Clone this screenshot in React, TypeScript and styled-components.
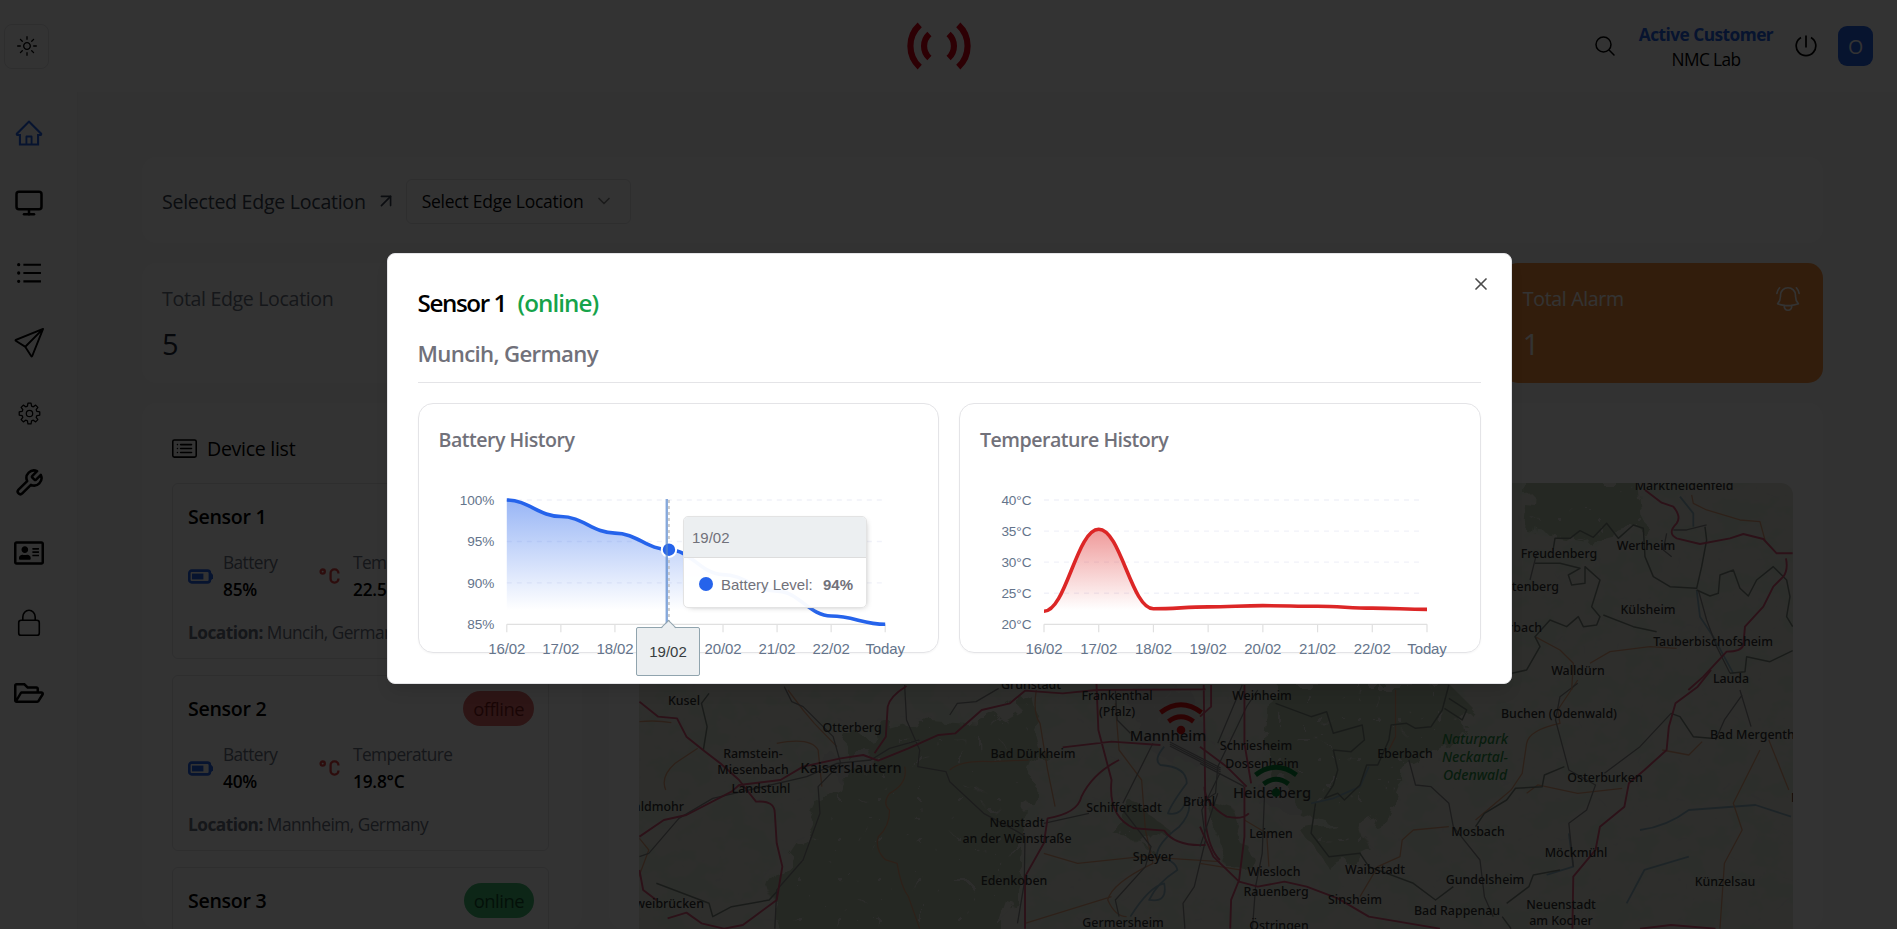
import React from "react";
import styled, { createGlobalStyle } from "styled-components";
import { LuMonitor, LuWrench, LuX, LuChevronDown, LuArrowUpRight } from "react-icons/lu";
import { AiOutlineHome, AiOutlineUnorderedList } from "react-icons/ai";
import { BsSend, BsCardList } from "react-icons/bs";
import { FaRegAddressCard, FaRegFolderOpen } from "react-icons/fa";
import { RxSun } from "react-icons/rx";
import { HiOutlineMagnifyingGlass, HiOutlineBellAlert } from "react-icons/hi2";

const GlobalStyle = createGlobalStyle`
  * { box-sizing: border-box; }
  body {
    margin: 0;
    overflow: hidden;
    background: #fff;
    color: #000;
    font-family: "Open Sans", "Noto Sans", sans-serif;
  }
  svg { display: block; flex: none; }
`;

/* ---------- page shell ---------- */

const Page = styled.div`
  position: relative;
  width: 1897px;
  height: 929px;
  overflow: hidden;
  background: #fff;
`;

const Header = styled.header`
  height: 92px;
  display: grid;
  grid-template-columns: 1fr auto 1fr;
  align-items: center;
  padding: 0 24px 0 4px;
`;

const ThemeButton = styled.button`
  width: 45px;
  height: 45px;
  padding: 0;
  display: flex;
  align-items: center;
  justify-content: center;
  border: 1px solid #e4e4e7;
  border-radius: 8px;
  background: #fff;
  color: #000;
`;

const HeaderRight = styled.div`
  display: flex;
  align-items: center;
  justify-content: flex-end;
  gap: 21px;
`;

const Customer = styled.div`
  width: 136px;
  padding-top: 2px;
  text-align: center;
  white-space: nowrap;
  font-size: 17.3px;
  line-height: 25px;
`;

const CustomerTitle = styled.div`
  font-weight: 700;
  color: #2563eb;
  letter-spacing: -0.53px;
`;

const CustomerName = styled.div`
  letter-spacing: -0.6px;
`;

const Avatar = styled.div`
  width: 35px;
  height: 40px;
  border-radius: 9px;
  background: #2563eb;
  color: #fff;
  display: flex;
  align-items: center;
  justify-content: center;
  font-size: 19.6px;
`;

const Body = styled.div`
  display: flex;
  height: 837px;
`;

const Sidebar = styled.nav`
  width: 78px;
  flex: none;
  border-right: 1px solid #f4f4f5;
  padding: 26px 0 0 14px;
  display: flex;
  flex-direction: column;
  gap: 40px;
`;

const NavItem = styled.a<{ $active?: boolean }>`
  width: 30px;
  height: 30px;
  display: flex;
  align-items: center;
  justify-content: center;
  color: ${(p) => (p.$active ? "#2563eb" : "#000")};
`;

const Main = styled.main`
  flex: 1;
  padding: 65px 74px 0 64px;
  background: #fafafa;
  display: flex;
  flex-direction: column;
  gap: 20px;
`;

const Card = styled.section`
  background: #fff;
  border-radius: 15px;
`;

/* ---------- location picker and totals ---------- */

const PickerCard = styled(Card)`
  height: 86px;
  padding: 2px 20px 0;
  display: flex;
  align-items: center;
  font-size: 19.6px;
  letter-spacing: -0.28px;
  color: #374151;

  > svg { margin-left: 9px; }
`;

const Select = styled.div`
  margin-left: 9px;
  width: 225px;
  height: 45px;
  padding: 0 16px 0 15px;
  border: 1px solid #e4e4e7;
  border-radius: 6px;
  display: flex;
  align-items: center;
  justify-content: space-between;
  color: #09090b;
  font-size: 17.5px;
  letter-spacing: -0.25px;

  svg { opacity: 0.5; }
`;

const Stats = styled.div`
  display: grid;
  grid-template-columns: repeat(5, 1fr);
  gap: 20px;
`;

const StatCard = styled(Card)<{ $alarm?: boolean }>`
  height: 120px;
  padding: 21px 20px 0;
  background: ${(p) => (p.$alarm ? "#fb923c" : "#fff")};
  color: ${(p) => (p.$alarm ? "#fff" : "#1f2937")};
`;

const StatLabel = styled.div<{ $alarm?: boolean }>`
  display: flex;
  justify-content: space-between;
  font-size: 19.6px;
  line-height: 30px;
  letter-spacing: -0.35px;
  color: ${(p) => (p.$alarm ? "#fff" : "#6b7280")};
`;

const StatValue = styled.div`
  margin-top: 9px;
  font-size: 29px;
  line-height: 41px;
`;

/* ---------- device list ---------- */

const Panels = styled.div`
  flex: 1;
  min-height: 0;
  display: flex;
  gap: 27px;
`;

const DevicePanel = styled(Card)`
  width: 440px;
  padding: 20px 33px 0 30px;
`;

const PanelTitle = styled.h2`
  margin: 0 0 10px;
  height: 50px;
  display: flex;
  align-items: center;
  gap: 10px;
  font-size: 19.6px;
  font-weight: 400;
  letter-spacing: -0.3px;
`;

const DeviceCard = styled.article`
  height: 176px;
  margin-bottom: 16px;
  padding: 15px 14px 15px 15px;
  border: 1px solid #e4e4e7;
  border-radius: 6px;
`;

const DeviceHead = styled.div`
  height: 35px;
  display: flex;
  align-items: center;
  justify-content: space-between;
`;

const DeviceName = styled.h3`
  margin: 0;
  font-size: 19.6px;
  font-weight: 600;
  letter-spacing: -0.3px;
`;

const Badge = styled.span<{ $online?: boolean }>`
  height: 35px;
  padding: 0 10px;
  border-radius: 18px;
  display: flex;
  align-items: center;
  font-size: 18.4px;
  letter-spacing: -0.5px;
  background: ${(p) => (p.$online ? "#43bd74" : "#e06c6c")};
  color: ${(p) => (p.$online ? "#14532d" : "#7f1d1d")};
`;

const Metrics = styled.div`
  margin-top: 15px;
  display: grid;
  grid-template-columns: 130px 1fr;
`;

const Metric = styled.div`
  display: flex;
  align-items: center;
  gap: 10px;
  font-size: 17.3px;
  line-height: 27px;
`;

const MetricLabel = styled.div`
  letter-spacing: -0.58px;
  color: #6b7280;
`;

const MetricValue = styled.div`
  font-weight: 600;
  letter-spacing: -0.2px;
`;

const Location = styled.div`
  margin-top: 17px;
  font-size: 17.3px;
  line-height: 26px;
  letter-spacing: -0.52px;
  white-space: nowrap;
  color: #6b7280;

  b { font-weight: 700; }
`;

const MapPanel = styled(Card)`
  flex: 1;
  padding: 80px 30px 0;
`;

const MapFrame = styled.div`
  height: 446px;
  border-radius: 12px 12px 0 0;
  overflow: hidden;
`;

/* ---------- dialog ---------- */

const Overlay = styled.div`
  position: absolute;
  inset: 0;
  background: rgba(0, 0, 0, 0.8);
`;

const Dialog = styled.div`
  position: absolute;
  left: 386.5px;
  top: 253px;
  width: 1125px;
  height: 431px;
  padding: 30px;
  border: 1px solid #e4e4e7;
  border-radius: 8px;
  background: #fff;
  box-shadow: 0 10px 15px -3px rgba(0, 0, 0, 0.1);
`;

const CloseButton = styled.button`
  position: absolute;
  top: 20px;
  right: 20px;
  padding: 0;
  border: 0;
  background: none;
  color: #000;
  opacity: 0.7;
`;

const DialogTitle = styled.h2`
  margin: 0;
  display: flex;
  gap: 11.5px;
  font-size: 24.2px;
  line-height: 38px;
  font-weight: 600;
  letter-spacing: -1.4px;
`;

const Online = styled.span`
  color: #16a34a;
  letter-spacing: -0.95px;
`;

const DialogSubtitle = styled.div`
  margin-top: 13px;
  height: 48px;
  border-bottom: 1px solid #e4e4e7;
  font-size: 22.2px;
  line-height: 38px;
  font-weight: 600;
  letter-spacing: -0.65px;
  color: #71717a;
`;

const Charts = styled.div`
  margin-top: 20px;
  display: grid;
  grid-template-columns: 1fr 1fr;
  gap: 20px;
`;

const ChartCard = styled.section`
  position: relative;
  height: 250px;
  border: 1px solid #e4e4e7;
  border-radius: 15px;
  box-shadow: 0 1px 2px rgba(0, 0, 0, 0.04);

  > svg { overflow: visible; }
`;

const ChartTitle = styled.h3`
  margin: 0;
  height: 60px;
  padding: 20px 20px 0;
  font-size: 19.6px;
  line-height: 31px;
  font-weight: 600;
  letter-spacing: -0.5px;
  color: #71717a;
`;

const Tooltip = styled.div`
  position: absolute;
  left: 264.5px;
  top: 112px;
  width: 184px;
  height: 92px;
  border: 1px solid #e3e3e3;
  border-radius: 5px;
  overflow: hidden;
  background: rgba(255, 255, 255, 0.96);
  box-shadow: 2px 2px 6px -4px #999;
  font-family: "Liberation Sans", Arial, sans-serif;
  font-size: 15px;
  color: #71717a;
`;

const TooltipHead = styled.div`
  height: 41px;
  padding: 3px 0 0 8px;
  line-height: 35px;
  border-bottom: 1px solid #ddd;
  background: #eceff1;
`;

const TooltipRow = styled.div`
  height: 50px;
  padding: 2px 13px 0 15px;
  display: flex;
  align-items: center;

  b { margin-left: auto; }
`;

const Dot = styled.span`
  width: 14px;
  height: 14px;
  margin-right: 8px;
  border-radius: 50%;
  background: #2563eb;
`;

const AxisTip = styled.div`
  position: absolute;
  left: 217.5px;
  top: 223px;
  width: 64px;
  height: 49px;
  border: 1px solid #90a4ae;
  border-radius: 2px;
  background: #eceff1;
  color: #373d3f;
  font-family: "Liberation Sans", Arial, sans-serif;
  font-size: 15px;
  line-height: 48px;
  text-align: center;

  &::before {
    content: "";
    position: absolute;
    left: 26px;
    top: -6px;
    width: 10px;
    height: 10px;
    transform: rotate(45deg);
    border: 1px solid #90a4ae;
    border-right: 0;
    border-bottom: 0;
    background: linear-gradient(135deg, #eceff1 50%, transparent 50%);
  }
`;

/* ---------- icons without a package equivalent ---------- */

const Logo = () => (
  <svg width="66" height="50" viewBox="0 0 64 48" fill="none" stroke="#e00018" strokeWidth="6">
    <path d="M13.3 3.5A27.8 27.8 0 0 0 13.3 44.5M22.7 12.3A15.8 15.8 0 0 0 22.7 35.7" />
    <path d="M50.7 3.5A27.8 27.8 0 0 1 50.7 44.5M41.3 12.3A15.8 15.8 0 0 1 41.3 35.7" />
  </svg>
);

const PowerIcon = () => (
  <svg width="22" height="22" viewBox="0 0 22 22" fill="none" stroke="#000" strokeWidth="1.7">
    <path d="M6 2.4A9.8 9.8 0 1 0 16 2.4M11 .5v12" />
  </svg>
);

const gearPath = (() => {
  const pts: string[] = [];
  for (let i = 0; i < 8; i++) {
    const a = (i * Math.PI) / 4;
    [[-0.27, 7.7], [-0.15, 10.4], [0.15, 10.4], [0.27, 7.7]].forEach(([o, r]) => {
      pts.push(`${(11.5 + r * Math.sin(a + o)).toFixed(2)} ${(11.5 - r * Math.cos(a + o)).toFixed(2)}`);
    });
  }
  return `M${pts.join("L")}Z`;
})();

const GearIcon = () => (
  <svg width="23" height="23" viewBox="0 0 23 23" fill="none" stroke="#000" strokeWidth="1.25" strokeLinejoin="round">
    <path d={gearPath} />
    <circle cx="11.5" cy="11.5" r="3.2" />
  </svg>
);

const LockIcon = () => (
  <svg width="24" height="28" viewBox="0 0 24 28" fill="none" stroke="#000" strokeWidth="1.6">
    <rect x="1.7" y="11.3" width="20.6" height="15" rx="2.4" />
    <path d="M5.8 11.3V8a6.2 6.8 0 0 1 12.4 0v3.3" />
  </svg>
);

const BatteryIcon = () => (
  <svg width="25" height="15" viewBox="0 0 25 15">
    <rect x="1.3" y="1.6" width="20.6" height="11.8" rx="2.4" fill="none" stroke="#2563eb" strokeWidth="2.6" />
    <path d="M22 2.8l3 3v3.4l-3 3z" fill="#2563eb" />
    <rect x="4" y="4.6" width="11.4" height="5.8" fill="#2563eb" />
  </svg>
);

const CelsiusIcon = () => (
  <svg width="25" height="16" viewBox="0 0 25 16" fill="none" stroke="#e04444" strokeWidth="2.3">
    <circle cx="4.7" cy="3.6" r="2.1" />
    <path d="M20.4 5.6V5a3.6 3.6 0 0 0-3.6-3.6h-.6A3.6 3.6 0 0 0 12.6 5v6a3.6 3.6 0 0 0 3.6 3.6h.6a3.6 3.6 0 0 0 3.6-3.6v-.6" />
  </svg>
);

/* ---------- charts ---------- */

type ChartProps = {
  id: string;
  color: string;
  values: number[];
  min: number;
  max: number;
  step: number;
  unit: string;
  left: number;
  right: number;
  fillTop: number;
  cursor?: number;
};

const DAYS = ["16/02", "17/02", "18/02", "19/02", "20/02", "21/02", "22/02", "Today"];
const TOP = 36;
const BOTTOM = 160.3;

function AreaChart({ id, color, values, min, max, step, unit, left, right, fillTop, cursor }: ChartProps) {
  const dx = (right - left) / (values.length - 1);
  const x = (i: number) => left + i * dx;
  const y = (v: number) => BOTTOM - ((v - min) / (max - min)) * (BOTTOM - TOP);
  let line = `M${x(0)} ${y(values[0])}`;
  for (let i = 1; i < values.length; i++) {
    line += `C${x(i - 1) + dx * 0.4} ${y(values[i - 1])} ${x(i) - dx * 0.4} ${y(values[i])} ${x(i)} ${y(values[i])}`;
  }
  const ticks: number[] = [];
  for (let v = min; v <= max; v += step) ticks.push(v);

  return (
    <svg width="519" height="188" fontFamily='"Liberation Sans", Arial, sans-serif' fill="#64748b">
      <defs>
        <linearGradient id={id} gradientUnits="userSpaceOnUse" x1="0" x2="0" y1={fillTop} y2="146">
          <stop offset="0" stopColor={color} stopOpacity="0.47" />
          <stop offset="1" stopColor={color} stopOpacity="0" />
        </linearGradient>
      </defs>
      {ticks.map((v) => (
        <g key={v}>
          {v > min && <path d={`M${left} ${y(v)}H${right - 3}`} stroke="#f1f2f9" strokeWidth="1.4" strokeDasharray="5 5" />}
          <text x={left - 12.6} y={y(v) + 4.8} textAnchor="end" fontSize="13.6" letterSpacing="-0.1">{v}{unit}</text>
        </g>
      ))}
      <path d={`M${left} ${BOTTOM}H${right}`} stroke="#e0e0e0" strokeWidth="1.2" />
      {DAYS.map((d, i) => (
        <g key={d}>
          <path d={`M${x(i)} ${BOTTOM}v8`} stroke="#e0e0e0" strokeWidth="1.2" />
          <text x={x(i)} y="190.3" textAnchor="middle" fontSize="15" letterSpacing="-0.1">{d}</text>
        </g>
      ))}
      <path d={`${line}V${BOTTOM}H${left}Z`} fill={`url(#${id})`} />
      <path d={line} fill="none" stroke={color} strokeWidth="3.6" />
      {cursor !== undefined && (
        <g>
          <path d={`M${x(cursor)} ${TOP}V${BOTTOM}`} stroke="#b6b6b6" strokeWidth="1.3" strokeDasharray="3 3" />
          <circle cx={x(cursor)} cy={y(values[cursor])} r="7.2" fill={color} stroke="#fff" strokeWidth="2" />
          <path d={`M${x(cursor) - 2.2} ${TOP - 1}V${BOTTOM}`} stroke="rgba(84,132,204,0.7)" strokeWidth="2.4" />
        </g>
      )}
    </svg>
  );
}

/* ---------- map ---------- */

type Place = [string, number, number, number?, ("start" | "end")?];

const PLACES: Place[] = [
  ["Kusel", 684, 701], ["Otterberg", 852, 728], ["Ramstein-", 753, 754], ["Miesenbach", 753, 770],
  ["Landstuhl", 761, 789], ["Kaiserslautern", 851, 768, 14.7], ["Waldmohr", 684, 807, 12.4, "end"],
  ["Neustadt", 1017, 823], ["an der Weinstraße", 1017, 839], ["Bad Dürkheim", 1033, 754],
  ["Frankenthal", 1117, 696], ["(Pfalz)", 1117, 712], ["Mannheim", 1168, 736, 14.8], ["Schifferstadt", 1124, 808],
  ["Brühl", 1199, 802], ["Speyer", 1153, 857], ["Edenkoben", 1014, 881], ["Germersheim", 1123, 923],
  ["Zweibrücken", 704, 904, 12.4, "end"], ["Grünstadt", 1031, 685], ["Weinheim", 1262, 696],
  ["Schriesheim", 1256, 746], ["Dossenheim", 1262, 764], ["Heidelberg", 1272, 793, 14.8], ["Leimen", 1271, 834],
  ["Wiesloch", 1274, 872], ["Rauenberg", 1276, 892], ["Östringen", 1279, 926], ["Eberbach", 1405, 754],
  ["Mosbach", 1478, 832], ["Waibstadt", 1375, 870], ["Gundelsheim", 1485, 880], ["Sinsheim", 1355, 900],
  ["Bad Rappenau", 1457, 911], ["Neuenstadt", 1561, 905], ["am Kocher", 1561, 921], ["Möckmühl", 1576, 853],
  ["Künzelsau", 1725, 882], ["Osterburken", 1605, 778], ["Buchen (Odenwald)", 1559, 714], ["Lauda", 1731, 679],
  ["Bad Mergentheim", 1710, 735, 12.4, "start"], ["Walldürn", 1578, 671], ["Marktheidenfeld", 1684, 486],
  ["Wertheim", 1646, 546], ["Freudenberg", 1559, 554], ["Miltenberg", 1559, 587, 12.4, "end"],
  ["Külsheim", 1648, 610], ["Amorbach", 1542, 628, 12.4, "end"], ["Tauberbischofsheim", 1713, 642],
  ["Niederstetten", 1791, 798, 12.4, "start"],
];

const WEST = "translate(630 670) scale(0.3762 0.3333)";
const EAST = "translate(1200 670) scale(0.4444 0.3333)";
const NORTH = "translate(1500 460) scale(0.3333)";

const Road = styled.path<{ $kind: "motorway" | "primary" | "rail" | "river" | "border" }>`
  fill: none;
  stroke-linejoin: round;
  vector-effect: non-scaling-stroke;
  stroke: ${(p) =>
    ({ motorway: "#d95577", primary: "#dfa27c", rail: "#8b8b8c", river: "#93b4c2", border: "#7d887f" })[p.$kind]};
  stroke-width: ${(p) => ({ motorway: 1.9, primary: 1.3, rail: 1.3, river: 1.8, border: 1.5 })[p.$kind]}px;
`;

const Signal = ({ x, y, color }: { x: number; y: number; color: string }) => (
  <g transform={`translate(${x} ${y})`} fill="none" stroke={color} strokeWidth="4.8">
    <path d="M-20.5 -17.5Q0 -33 20.5 -17.5M-12.5 -8.5Q0 -18 12.5 -8.5" />
    <circle r="4.3" fill={color} stroke="none" />
  </g>
);

const MapView = () => (
  <svg width="1154" height="446" viewBox="639 483 1154 446" fontFamily='"Noto Sans", sans-serif'>
    <defs>
      <filter id="woods" x="0" y="0" width="100%" height="100%">
        <feTurbulence type="fractalNoise" baseFrequency="0.032 0.04" numOctaves="4" seed="7" />
        <feColorMatrix values="0 0 0 0 0.72  0 0 0 0 0.80  0 0 0 0 0.67  8 0 0 0 -3.8" />
      </filter>
      <filter id="rough" x="-5%" y="-5%" width="110%" height="110%">
        <feTurbulence type="fractalNoise" baseFrequency="0.04" numOctaves="3" seed="3" />
        <feDisplacementMap in="SourceGraphic" scale="34" />
      </filter>
      <filter id="lanes" x="0" y="0" width="100%" height="100%">
        <feTurbulence type="turbulence" baseFrequency="0.025" numOctaves="2" seed="11" />
        <feColorMatrix values="0 0 0 0 0.74  0 0 0 0 0.73  0 0 0 0 0.70  -30 0 0 0 1.1" />
      </filter>
    </defs>
    <rect x="639" y="483" width="1154" height="446" fill="#e6e5dc" />
    <rect x="639" y="483" width="1154" height="446" filter="url(#woods)" />
    <g fill="#b9c9ae" filter="url(#rough)">
      <path d="M850 740l70-20 60 5 50-30 15 60-20 50-5 70-30 90-190 10-30-90 40-60z" />
      <path d="M1275 680l170 0 30 30-30 40-40 20-20 50-30 10-60-20-30-40z" />
      <path d="M1530 475l110 0 5 50-60 15-60-10zM1300 830l60-10 10 30-40 20z" />
      <path d="M1205 800l30 10 20 60-30-5zM1110 830l20-30 40 30-20 20z" />
    </g>
    <g fill="#dcdad8" filter="url(#rough)">
      <path d="M1130 690l60 0 20 50-30 30-45-30zM1255 780l35 0 5 30-30 0zM825 755l50 0 5 15-50 4z" />
    </g>
    <rect x="639" y="483" width="1154" height="446" filter="url(#lanes)" />
    <g transform={WEST}>
      <Road $kind="river" d="M1420 230Q1390 270 1410 285Q1480 290 1480 340Q1440 400 1430 430Q1470 440 1480 380Q1500 420 1460 470Q1400 520 1400 560Q1450 570 1455 600Q1400 640 1380 690Q1430 700 1420 640Q1380 650 1330 740" />
      <Road $kind="primary" d="M25 155Q70 150 110 158M95 360Q80 320 120 280L180 235M390 220Q480 200 500 240L510 350M420 60L460 120L490 160L550 230M730 290Q740 340 690 370Q670 400 690 420Q690 470 660 500Q650 540 680 570L710 580Q720 650 740 680L770 776M850 300Q880 270 960 275L1060 270M1080 60Q1070 130 1090 160L1110 300L1130 410M1290 100L1300 240L1360 330L1370 480L1390 580Q1280 640 1270 690Q1290 740 1320 740M1100 550L1190 580L1360 560L1568 575M1050 760L1280 680M25 505L50 540L20 630" />
      <Road $kind="rail" d="M25 560L50 550L130 445L220 385L470 320L550 280L640 270L690 235L770 210M730 45L735 150L770 240L765 290L840 305L850 335L940 430L1030 485L1050 500L1048 640L1030 760M1100 460L1220 430M1310 400L1390 220M1310 420L1385 530L1370 590L1290 690L1300 740M850 135L870 100L920 95L980 55M1290 60L1295 150L1330 190M1568 310L1520 420L1530 510L1500 650L1470 700L1475 776M410 50L430 95L460 110L540 200L560 280L500 350L505 430L460 570L390 660L385 776" />
      <Road $kind="border" d="M210 70L190 100L205 170L195 240M390 665L370 690L270 710L220 740L210 700L70 640" />
      <Road $kind="motorway" d="M25 95L75 140L125 145L150 200L200 245L240 280L290 330L300 345L335 395Q385 390 385 430L390 520L405 590L390 690L330 740L300 765L250 776L190 760L150 728L100 745M25 500L90 450L150 435L270 365L290 345L400 330L460 290L560 265L620 255L660 272L740 235L820 195L865 190L935 120L1010 100L1050 62L1150 70L1240 60L1530 58M735 48Q690 80 685 110L680 200L650 250M1240 42L1245 180L1280 330Q1270 440 1340 475L1420 482Q1450 530 1530 525M1050 776L1050 620L1100 520L1110 445Q1190 430 1200 380Q1230 310 1300 270M1150 232L1280 215L1410 225M1525 45L1530 460Q1540 540 1568 570M25 600L35 660L70 690" />
      <Road $kind="rail" d="M1435 222L1570 300M1435 228L1570 306M1435 216L1570 294" />
    </g>
    <g transform={EAST}>
      <Road $kind="river" d="M990 480Q1050 470 1100 420L1250 405L1330 440M1100 560L1000 600L960 700M830 490L840 590L780 615M250 400L300 385L360 350L380 290" />
      <Road $kind="primary" d="M850 30L805 120L810 160Q740 180 735 220L725 310L700 360L620 450M440 60L440 200L425 240M560 470L480 480L455 510L450 560L400 590L360 680M1040 240L1100 255L1130 215M1280 210L1325 360M1260 240L1200 400L1220 480L1180 580L1170 776M735 370L760 345L850 370L950 355M100 450L150 490L155 590M0 580L90 600" />
      <Road $kind="rail" d="M130 60L105 110L40 290L35 370L0 400M145 380L140 550L125 650L118 776M0 530L40 370M95 45L40 220M850 40L810 80L800 150L830 300L890 345L870 420L830 460L840 590M1220 75L1180 150L1160 210M1215 60L1240 170M910 310L990 230L1060 130M0 280L100 350M470 270L485 345L520 350L560 400L570 470L630 570L640 680L660 740" />
      <Road $kind="border" d="M170 100L250 140L285 125L300 190L365 165L370 210L340 245L300 240L310 300L300 345L280 385L310 370L325 390L360 345L375 285L400 285L425 210L430 165L465 160L485 175L520 170L545 120L560 45M560 85L600 120L590 150L550 115M820 290L775 315L770 350L710 355L690 390L640 430L620 470M260 400L250 490L290 560L360 550L380 590L480 640L530 690L570 650M690 700L740 650L750 615L810 600M1060 130L1080 140L1110 200L1150 205M680 740L700 776" />
      <Road $kind="motorway" d="M1150 0L1120 50L1070 100L1055 170L1050 240L1000 300L965 340L955 410L900 470L890 540L840 620L838 776M25 45L25 110L0 140M100 45L100 220L115 340M100 350L100 500L88 630L70 690L68 776M10 350Q10 400 60 440Q95 450 110 430M0 470L30 560L88 635L130 650L190 635L240 650L310 685L380 740L540 776M990 776L1060 765L1160 776M0 230L60 290L105 350" />
    </g>
    <g transform={NORTH}>
      <Road $kind="river" d="M540 110L580 160L580 200M590 390L600 470L640 530L700 640" />
      <Road $kind="primary" d="M575 105L580 130L620 150L720 180L780 185L795 240M105 530L180 570L220 610L215 690M270 610L330 575L450 560L530 565" />
      <Road $kind="rail" d="M110 280L90 360M595 390L620 480L650 560L690 640M520 210L560 210L620 195M500 220L490 270L515 290" />
      <Road $kind="border" d="M160 265L165 235L210 235L240 212L280 232L320 190L355 235L400 195L430 205L435 290L460 350L510 380L590 385L605 320L620 240L615 200M590 390L630 408L655 400L660 345L700 330L720 385L745 408L770 360L820 320L860 360L870 410L860 470L878 500M105 310L180 310L240 325L205 345L215 375L255 370L255 320L300 360L275 440L300 470L290 495L250 500L235 470L200 500L150 480L105 530L120 560L80 630L36 640M310 465L400 500L470 515M690 640L735 635L740 590L810 605L878 572" />
      <Road $kind="motorway" d="M435 90L485 128L520 140Q545 170 530 190Q500 220 530 235L600 252L690 235L730 222L790 237L830 280L878 280M858 295Q865 330 850 350L820 380L790 440L735 500L730 555Q725 575 680 575L610 650L565 690" />
    </g>
    <g fill="#333" textAnchor="middle" fontWeight="500">
      {PLACES.map(([name, x, y, size = 12.4, anchor = "middle"]) => (
        <text key={name} x={x} y={y + size * 0.36} fontSize={size} textAnchor={anchor}>{name}</text>
      ))}
    </g>
    <g fill="#2c8f46" fontSize="14" fontStyle="italic" fontWeight="500" textAnchor="middle">
      <text x="1475" y="744">Naturpark</text>
      <text x="1475" y="762">Neckartal-</text>
      <text x="1475" y="780">Odenwald</text>
    </g>
    <Signal x={1181} y={730} color="#e01212" />
    <Signal x={1276} y={792.5} color="#07893a" />
  </svg>
);

/* ---------- app ---------- */

const DEVICES = [
  { name: "Sensor 1", online: true, battery: "85%", temp: "22.5°C", place: "Muncih, Germany" },
  { name: "Sensor 2", online: false, battery: "40%", temp: "19.8°C", place: "Mannheim, Germany" },
  { name: "Sensor 3", online: true, battery: "75%", temp: "21.0°C", place: "Heidelberg, Germany" },
];

export default function App() {
  return (
    <Page>
      <GlobalStyle />
      <Header>
        <ThemeButton><RxSun size={20} /></ThemeButton>
        <Logo />
        <HeaderRight>
          <HiOutlineMagnifyingGlass size={24} />
          <Customer>
            <CustomerTitle>Active Customer</CustomerTitle>
            <CustomerName>NMC Lab</CustomerName>
          </Customer>
          <PowerIcon />
          <Avatar>O</Avatar>
        </HeaderRight>
      </Header>
      <Body>
        <Sidebar>
          <NavItem $active><AiOutlineHome size={30} /></NavItem>
          <NavItem><LuMonitor size={30} /></NavItem>
          <NavItem><AiOutlineUnorderedList size={30} /></NavItem>
          <NavItem><BsSend size={30} /></NavItem>
          <NavItem><GearIcon /></NavItem>
          <NavItem><LuWrench size={30} /></NavItem>
          <NavItem><FaRegAddressCard size={30} /></NavItem>
          <NavItem><LockIcon /></NavItem>
          <NavItem><FaRegFolderOpen size={30} /></NavItem>
        </Sidebar>
        <Main>
          <PickerCard>
            Selected Edge Location
            <LuArrowUpRight size={22} strokeWidth={1.8} />
            <Select>
              Select Edge Location
              <LuChevronDown size={20} />
            </Select>
          </PickerCard>
          <Stats>
            <StatCard>
              <StatLabel>Total Edge Location</StatLabel>
              <StatValue>5</StatValue>
            </StatCard>
            <StatCard />
            <StatCard />
            <StatCard />
            <StatCard $alarm>
              <StatLabel $alarm>Total Alarm<HiOutlineBellAlert size={30} strokeWidth={1.3} /></StatLabel>
              <StatValue>1</StatValue>
            </StatCard>
          </Stats>
          <Panels>
            <DevicePanel>
              <PanelTitle><BsCardList size={25} />Device list</PanelTitle>
              {DEVICES.map((d) => (
                <DeviceCard key={d.name}>
                  <DeviceHead>
                    <DeviceName>{d.name}</DeviceName>
                    <Badge $online={d.online}>{d.online ? "online" : "offline"}</Badge>
                  </DeviceHead>
                  <Metrics>
                    <Metric>
                      <BatteryIcon />
                      <div>
                        <MetricLabel>Battery</MetricLabel>
                        <MetricValue>{d.battery}</MetricValue>
                      </div>
                    </Metric>
                    <Metric>
                      <CelsiusIcon />
                      <div>
                        <MetricLabel>Temperature</MetricLabel>
                        <MetricValue>{d.temp}</MetricValue>
                      </div>
                    </Metric>
                  </Metrics>
                  <Location><b>Location:</b> {d.place}</Location>
                </DeviceCard>
              ))}
            </DevicePanel>
            <MapPanel>
              <MapFrame><MapView /></MapFrame>
            </MapPanel>
          </Panels>
        </Main>
      </Body>

      <Overlay />
      <Dialog role="dialog">
        <DialogTitle>Sensor 1 <Online>(online)</Online></DialogTitle>
        <DialogSubtitle>Muncih, Germany</DialogSubtitle>
        <Charts>
          <ChartCard>
            <ChartTitle>Battery History</ChartTitle>
            <AreaChart
              id="battery-fill" color="#2563eb" unit="%" min={85} max={100} step={5}
              values={[100, 98, 96, 94, 91, 89, 86, 85]} left={87.8} right={466.2} fillTop={36} cursor={3}
            />
            <Tooltip>
              <TooltipHead>19/02</TooltipHead>
              <TooltipRow><Dot />Battery Level:<b>94%</b></TooltipRow>
            </Tooltip>
            <AxisTip>19/02</AxisTip>
          </ChartCard>
          <ChartCard>
            <ChartTitle>Temperature History</ChartTitle>
            <AreaChart
              id="temperature-fill" color="#dc2626" unit="°C" min={20} max={40} step={5}
              values={[22.1, 35.3, 22.5, 22.8, 23, 22.9, 22.6, 22.4]} left={84} right={467} fillTop={65}
            />
          </ChartCard>
        </Charts>
        <CloseButton aria-label="Close"><LuX size={20} /></CloseButton>
      </Dialog>
    </Page>
  );
}
